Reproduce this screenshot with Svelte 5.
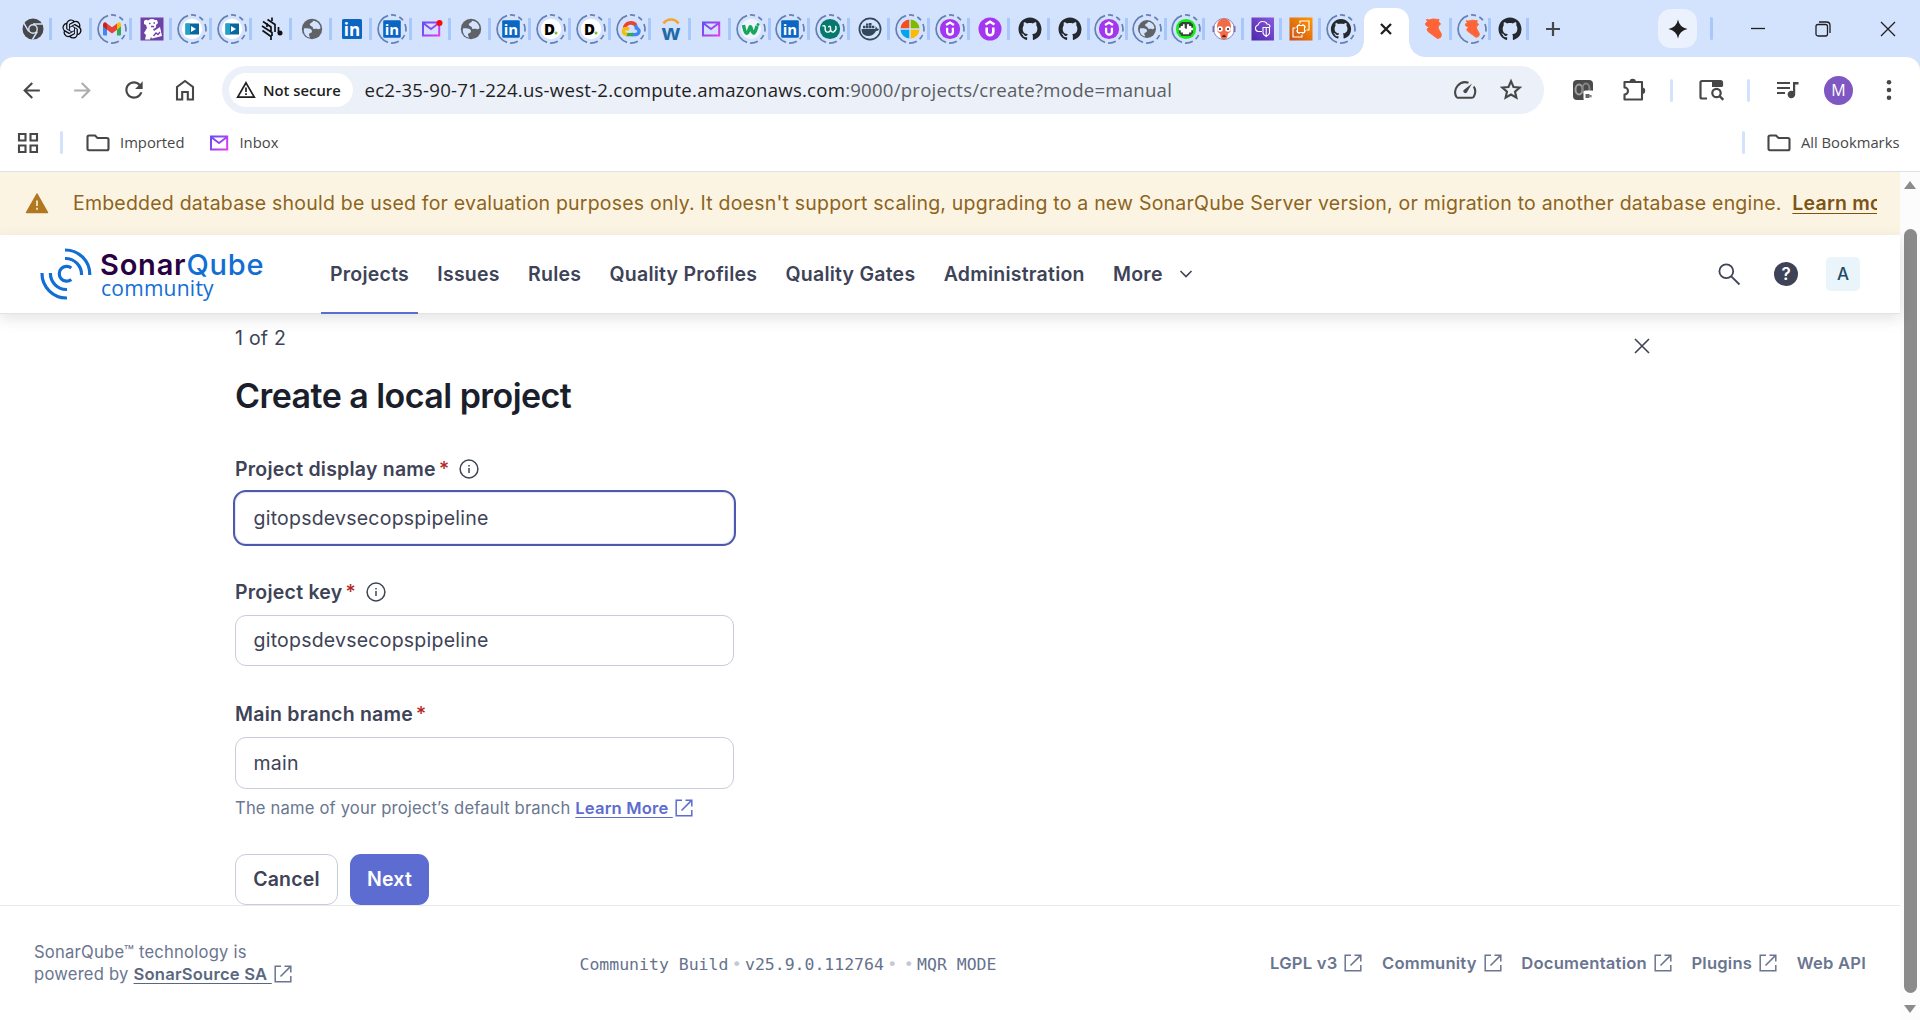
<script>
  const wideTabs = [
    ['chrome'], ['knot'], ['gmail', 1], ['dog'], ['video', 1], ['video', 1], ['stripes'], ['globe'],
    ['linkedin'], ['linkedin', 1], ['mailDot'], ['globe'], ['linkedin', 1], ['dee', 1], ['dee', 1],
    ['cloud', 1], ['dubArc'], ['mail'], ['greenW', 1], ['linkedin', 1], ['tealW', 1], ['docker'],
    ['windows', 1], ['udemy', 1], ['udemy'], ['github'], ['github']
  ];
  const narrowTabs = [
    ['udemy', 1], ['globe', 1], ['pulse', 1], ['argo'], ['purpleCloud'], ['ec2'], ['github', 1]
  ];
  const endTabs = [['brush'], ['brush', 1], ['github']];

  const navItems = ['Projects', 'Issues', 'Rules', 'Quality Profiles', 'Quality Gates', 'Administration'];
  const footerLinks = ['LGPL v3', 'Community', 'Documentation', 'Plugins'];

  const githubPath = 'M8 0C3.58 0 0 3.58 0 8c0 3.54 2.29 6.53 5.47 7.59.4.07.55-.17.55-.38 0-.19-.01-.82-.01-1.49-2.01.37-2.53-.49-2.69-.94-.09-.23-.48-.94-.82-1.13-.28-.15-.68-.52-.01-.53.63-.01 1.08.58 1.23.82.72 1.21 1.87.87 2.33.66.07-.52.28-.87.51-1.07-1.78-.2-3.64-.89-3.64-3.95 0-.87.31-1.59.82-2.15-.08-.2-.36-1.02.08-2.12 0 0 .67-.21 2.2.82.64-.18 1.32-.27 2-.27s1.36.09 2 .27c1.53-1.04 2.2-.82 2.2-.82.44 1.1.16 1.92.08 2.12.51.56.82 1.27.82 2.15 0 3.07-1.87 3.75-3.65 3.95.29.25.54.73.54 1.48 0 1.07-.01 1.93-.01 2.2 0 .21.15.46.55.38A8.01 8.01 0 0 0 16 8c0-4.42-3.58-8-8-8z';
  const knotPath = 'M22.2819 9.8211a5.9847 5.9847 0 0 0-.5157-4.9108 6.0462 6.0462 0 0 0-6.5098-2.9A6.0651 6.0651 0 0 0 4.9807 4.1818a5.9847 5.9847 0 0 0-3.9977 2.9 6.0462 6.0462 0 0 0 .7427 7.0966 5.98 5.98 0 0 0 .511 4.9107 6.051 6.051 0 0 0 6.5146 2.9001A5.9847 5.9847 0 0 0 13.2599 24a6.0557 6.0557 0 0 0 5.7718-4.2058 5.9894 5.9894 0 0 0 3.9977-2.9001 6.0557 6.0557 0 0 0-.7475-7.0729zm-9.022 12.6081a4.4755 4.4755 0 0 1-2.8764-1.0408l.1419-.0804 4.7783-2.7582a.7948.7948 0 0 0 .3927-.6813v-6.7369l2.02 1.1686a.071.071 0 0 1 .038.052v5.5826a4.504 4.504 0 0 1-4.4945 4.4944zm-9.6607-4.1254a4.4708 4.4708 0 0 1-.5346-3.0137l.142.0852 4.783 2.7582a.7712.7712 0 0 0 .7806 0l5.8428-3.3685v2.3324a.0804.0804 0 0 1-.0332.0615L9.74 19.9502a4.4992 4.4992 0 0 1-6.1408-1.6464zM2.3408 7.8956a4.485 4.485 0 0 1 2.3655-1.9728V11.6a.7664.7664 0 0 0 .3879.6765l5.8144 3.3543-2.0201 1.1685a.0757.0757 0 0 1-.071 0l-4.8303-2.7865A4.504 4.504 0 0 1 2.3408 7.872zm16.5963 3.8558L13.1038 8.364 15.1192 7.2a.0757.0757 0 0 1 .071 0l4.8303 2.7913a4.4944 4.4944 0 0 1-.6765 8.1042v-5.6772a.79.79 0 0 0-.407-.667zm2.0107-3.0231l-.142-.0852-4.7735-2.7818a.7759.7759 0 0 0-.7854 0L9.409 9.2297V6.8974a.0662.0662 0 0 1 .0284-.0615l4.8303-2.7866a4.4992 4.4992 0 0 1 6.6802 4.66zM8.3065 12.863l-2.02-1.1638a.0804.0804 0 0 1-.038-.0567V6.0742a4.4992 4.4992 0 0 1 7.3757-3.4537l-.142.0805L8.704 5.459a.7948.7948 0 0 0-.3927.6813zm1.0976-2.3654l2.602-1.4998 2.6069 1.4998v2.9994l-2.5974 1.4997-2.6067-1.4997Z';
</script>

{#snippet glyph(kind)}
  {#if kind === 'chrome'}
    <circle r="10.5" fill="#474747" />
    <circle r="4.9" fill="#d3e2fd" />
    <circle r="3.5" fill="#474747" />
    <path d="M0-4.9H9.6M4.3 2.5-.6 10.6M-4.3 2.5-9-5.7" stroke="#d3e2fd" stroke-width="1.5" />
  {:else if kind === 'knot'}
    <path transform="translate(-9.6 -9.6) scale(.8)" d={knotPath} fill="#0d0d0d" />
  {:else if kind === 'gmail'}
    <path d="M-9-4.5V5.2q0 1.3 1.3 1.3h2.7V-2z" fill="#4285f4" />
    <path d="M9-4.5V5.2q0 1.3-1.3 1.3H5V-2z" fill="#34a853" />
    <path d="M5-5.6 6-6.4Q9-7.5 9-4v1.6L5 .8z" fill="#fbbc04" />
    <path d="M-5-5.6 0-1.8 5-5.6V.8L0 4.5-5 .8z" fill="#ea4335" />
    <path d="M-5-5.6-6-6.4Q-9-7.5-9-4v1.6L-5 .8z" fill="#c5221f" />
  {:else if kind === 'dog'}
    <rect x="-11.5" y="-11.5" width="23" height="23" fill="#6f42a5" />
    <path d="M-8-8Q-6-10-4-8.5 0-11 3-9L5-9 6-6 4-4Q5-1 1 0L2 2 8-2 10 7 0 9.500-1 8-2 10.500H-7L-6 6-8 4-5-1-6-4-8-5z" fill="#fff" />
    <path d="M-3-5.500h1.500M1.500-6H3M-1-2.500h3M1.500 7 4 4 6 5.500 8 3" stroke="#6f42a5" stroke-width="1.300" fill="none" />
  {:else if kind === 'video'}
    <circle r="10.2" fill="#fff" />
    <rect x="-6.5" y="-5.5" width="13.5" height="11" fill="#0a66a0" />
    <rect x="-6.5" y="-5.5" width="4.5" height="11" fill="#1fa3c8" />
    <path d="M-1-3 4 0-1 3z" fill="#fff" />
  {:else if kind === 'stripes'}
    <path d="M0-11.500V-8M-4.500-9.500 3-4.500V-1M-9-7.500-1-2V2M-10-3 0 3.500V7M-9.500 1.500-1 7.500V11M3-4.500V3M6.500-2V4M-5-6v4" stroke="#111" stroke-width="1.700" fill="none" />
    <circle cx="8" cy="4" r="2.5" fill="#111" />
  {:else if kind === 'globe'}
    <circle r="10.2" fill="#5f6368" />
    <path d="M-8-.5C-6-1 0-.8 0 2s-3 1.5-3 3.5 1 1.500 1 3C-6 8.500-9 4-8-.5zM1-8.200C1-6-3-6-2-4s3 1 3 3 3 0 4.500 1 3-1 3-1C8.200-5 5-8 1-8.200z" fill="#d3e2fd" />
  {:else if kind === 'linkedin'}
    <rect x="-10" y="-10" width="20" height="20" rx="1.500" fill="#0a66c2" />
    <text x="0" y="7" text-anchor="middle" class="in">in</text>
  {:else if kind === 'mail' || kind === 'mailDot'}
    <path d="M-8-6.500H8.200V6.500H-8zM-8-6 0 0 8-6" fill="none" stroke="url(#mailGrad)" stroke-width="2" />
    {#if kind === 'mailDot'}<circle cx="8.500" cy="-6" r="3" fill="#f80c0c" />{/if}
  {:else if kind === 'dee'}
    <circle r="10.2" fill="#fff" />
    <text x="-1.500" y="5.500" text-anchor="middle" class="dee">D</text>
    <circle cx="5" cy="4" r="1.500" fill="#86bc25" />
  {:else if kind === 'cloud'}
    <path d="M-6.500-1A6.500 6.500 0 0 1 5-3.500" stroke="#ea4335" stroke-width="3.600" fill="none" />
    <path d="M4-3.500Q6.500-1 6-.5 9 1 7.500 4 6.500 6 1 5.500" stroke="#4285f4" stroke-width="3.400" fill="none" />
    <path d="M2 5.600H-5" stroke="#34a853" stroke-width="3.400" />
    <path d="M-4 5.600Q-8 5-7.500 1.500-6.500-2-2 .5" stroke="#fbbc04" stroke-width="3.400" fill="none" />
  {:else if kind === 'dubArc'}
    <path d="M-7.500-5.500A9 9 0 0 1 7.500-5.500" stroke="#f5a52c" stroke-width="2.600" fill="none" />
    <text x="0" y="11" text-anchor="middle" class="dub">w</text>
  {:else if kind === 'greenW'}
    <circle r="10.2" fill="#eef3fd" />
    <path d="M-7.500-4C-6 5-4 6-2.500 2L-1-2C0-4 1 5 3 4 5 2 5 0 6-3" stroke="#16a75c" stroke-width="3.400" fill="none" stroke-linejoin="round" />
    <circle cx="7" cy="-4.500" r="1.500" fill="#16a75c" />
  {:else if kind === 'tealW'}
    <circle r="11.500" fill="#05796b" />
    <path d="M-8-3.500Q-5.500-4.500-5.500-2-6 4-2 3.500 1.500 3 .5-2 0-4-1.500-2.500M.5 0Q1 4 4 3.500 8 1 6.500-3" stroke="#fff" stroke-width="1.600" fill="none" stroke-linecap="round" />
  {:else if kind === 'docker'}
    <circle r="10.6" fill="none" stroke="#33475b" stroke-width="1.700" />
    <path d="M-8.500 0H5q1-1 .5-2.500Q7-2 7-.5 9-.5 9 .5 8 2 6 2 3.500 7-2 7-8.500 7-8.500 0zM-7-3.200h2.500V-.7H-7zM-4-3.200h2.500V-.7H-4zM-1-3.200h2.500V-.7H-1zM-1-6h2.500v2.400H-1zM2-3.200h2.300V-.7H2zM-4-5.400h2.500v1.800H-4z" fill="#33475b" />
  {:else if kind === 'windows'}
    <path d="M-.7-9.500V-.7H-9.500A9.500 9.500 0 0 1-.7-9.500z" fill="#f25022" />
    <path d="M.7-9.500V-.7H9.500A9.500 9.500 0 0 0 .7-9.500z" fill="#7fba00" />
    <path d="M-.7 9.500V.7H-9.500A9.500 9.500 0 0 0-.7 9.500z" fill="#00a4ef" />
    <path d="M.7 9.500V.7H9.500A9.500 9.500 0 0 1 .7 9.500z" fill="#ffb900" />
  {:else if kind === 'udemy'}
    <circle r="11.500" fill="#a435f0" />
    <path d="M-4.500-4.500 0-7.300l4.500 2.800M-3.300-1.500V3a3.300 3.300 0 0 0 6.600 0V-1.500" stroke="#fff" stroke-width="2.600" fill="none" />
  {:else if kind === 'github'}
    <path transform="translate(-11.5 -11.5) scale(1.437)" d={githubPath} fill="#24292f" />
  {:else if kind === 'pulse'}
    <circle r="11.500" fill="#12ef12" />
    <path d="M-5-8H5L8-5V4L5 8H-5L-8 4V-5z" fill="#3a4540" />
    <path d="M-6-3.500h2.500v-2h2V-1H1V-5.500H3.500v2H6V-1.500H8V1.500H6V4H3.500V6h-7V4H-6V1.500H-8V-1.500H-6z" fill="#fff" />
    <path d="M0-6V0" stroke="#3a4540" stroke-width="1.400" />
  {:else if kind === 'argo'}
    <circle r="10.5" fill="#fff" stroke="#8c86b8" stroke-width="1" />
    <path d="M-7-3A7 7.500 0 0 1 7-3V0Q7 3 4 4.500L3 9q-3 2.500-6 0l-1-4.500Q-7 3-7 0z" fill="#f26b47" />
    <circle cx="-4" r="2.800" fill="#fff" /><circle cx="4" r="2.800" fill="#fff" />
    <circle cx="-4" r="1.100" fill="#222" /><circle cx="4" r="1.100" fill="#222" />
    <path d="M-2 8q0-2 2-2t2 2z" fill="#4a2018" />
    <path d="M-10.500-3v6M10.500-3v6" stroke="#7b73b0" stroke-width="2" />
  {:else if kind === 'purpleCloud'}
    <rect x="-11.500" y="-11.500" width="22.500" height="23" fill="url(#vpcGrad)" />
    <path d="M-1 2.500H-5Q-8 1.500-7.500-1.500-7-3.500-5-4-3.500-8 0-7.500 3-7.500 4-5 7-5 7-2M0-1.500h6.500V4Q6 6 3.200 7.500.5 6 0 4zM3.200-1.500v9" stroke="#fff" stroke-width="1.100" fill="none" />
  {:else if kind === 'ec2'}
    <rect x="-11.500" y="-11.500" width="23" height="23" fill="url(#ec2Grad)" />
    <path d="M-3.500-3.500h7v7h-7zM-1-5.500V-8H8V1H5.500M1 5.500V8H-8V-1h2.500M-2-5v1.500M2-5v1.500M-2 3.500V5M2 3.500V5M-5-2h1.500M-5 2h1.500M3.500-2H5M3.500 2H5" stroke="#fff" stroke-width="1.100" fill="none" />
  {:else if kind === 'brush'}
    <path d="M-6.500-9.500-4-9 0-10 6-9.500 5.500-7.500 7.500-5 5.500-3 5-1 8.500 5.500 7.500 8.500 4.500 9.500-5 2.500-6 0-3.500-2-7-3.500-7.500-5.500-5.500-7.500z" fill="#ff6436" stroke="#ff6436" stroke-width="1" stroke-linejoin="round" />
  {/if}
{/snippet}

{#snippet tab([kind, asleep])}
  <svg class="favicon" viewBox="-15 -15 30 30" width="30" height="30">
    {#if asleep}
      <path class="ring" d="M-4-13.400A14 14 0 0 0-4 13.400M-1-14A14 14 0 0 1 4-13.400M7.300-12A14 14 0 0 1 11-8.700M13-5A14 14 0 0 1 13.800 2.500M12.600 6A14 14 0 0 1 9.600 10.200M6.800 12.200A14 14 0 0 1-1 14" />
      <g transform={['video', 'dee', 'greenW', 'windows', 'gmail', 'cloud'].includes(kind) ? null : 'scale(.88)'}>
        {@render glyph(kind)}
      </g>
    {:else}
      {@render glyph(kind)}
    {/if}
  </svg>
{/snippet}

{#snippet external()}
  <svg class="ext" viewBox="0 0 18 18" width="18" height="18">
    <path d="M7 1.200H1.200V16.800H16.800V11M10.500 1.200H16.800V7.500M16.600 1.400 6.500 11.500" />
  </svg>
{/snippet}

{#snippet info()}
  <svg class="info" viewBox="0 0 20 20" width="20" height="20">
    <circle cx="10" cy="10" r="8.900" /><path d="M10 9v5M10 6v1.500" />
  </svg>
{/snippet}

{#snippet folder()}
  <svg viewBox="0 0 24 18" width="24" height="18" class="stroke2">
    <path d="M1.500 14.500V3Q1.500 1.500 3 1.500H9L11.500 4H21Q22.500 4 22.500 5.500V14.700Q22.500 16.200 21 16.200H3Q1.500 16.200 1.500 14.500z" />
  </svg>
{/snippet}

<svg class="defs" width="0" height="0">
  <defs>
    <linearGradient id="mailGrad" gradientUnits="userSpaceOnUse" x1="-8" y1="-6" x2="8" y2="7">
      <stop offset="0" stop-color="#6a4df5" /><stop offset=".5" stop-color="#9b45f5" /><stop offset="1" stop-color="#e83af0" />
    </linearGradient>
    <linearGradient id="vpcGrad" x1="0" y1="1" x2="1" y2="0">
      <stop offset="0" stop-color="#4d27a8" /><stop offset="1" stop-color="#8a5ae0" />
    </linearGradient>
    <linearGradient id="ec2Grad" x1="0" y1="1" x2="1" y2="0">
      <stop offset="0" stop-color="#c8511b" /><stop offset="1" stop-color="#f90" />
    </linearGradient>
  </defs>
</svg>

<div class="window">
  <header class="tabstrip">
    {#each wideTabs as t}<div class="tab">{@render tab(t)}</div>{/each}
    {#each narrowTabs as t}<div class="tab narrow">{@render tab(t)}</div>{/each}
    <div class="tab active">
      <svg viewBox="0 0 14 14" width="14" height="14"><path d="M2 2l10 10M12 2 2 12" stroke="#1f1f1f" stroke-width="2.300" /></svg>
    </div>
    {#each endTabs as t}<div class="tab narrow">{@render tab(t)}</div>{/each}
    <div class="newtab">
      <svg viewBox="0 0 16 16" width="16" height="16"><path d="M8 1v14M1 8h14" stroke="#474747" stroke-width="2.200" /></svg>
    </div>
    <div class="spark">
      <svg viewBox="0 0 20 20" width="20" height="20"><path d="M10 .5Q11.500 8.500 19.500 10 11.500 11.500 10 19.500 8.500 11.500.5 10 8.500 8.500 10 .5z" fill="#1f1f1f" /></svg>
    </div>
    <div class="sep strip"></div>
    <div class="controls">
      <svg viewBox="0 0 16 16" width="16" height="16"><path d="M1 7.500h14" /></svg>
      <svg viewBox="0 0 16 16" width="16" height="16"><rect x="1" y="3.500" width="11.500" height="11.500" rx="2" /><path d="M4 1H11.500Q15 1 15 4.500V12" /></svg>
      <svg viewBox="0 0 16 16" width="16" height="16"><path d="M1 1l14 14M15 1 1 15" /></svg>
    </div>
  </header>

  <div class="chrome">
    <div class="toolbar">
      <div class="cell"><svg viewBox="0 0 24 24" width="25" height="25"><path d="M20 11H7.830l5.590-5.590L12 4l-8 8 8 8 1.410-1.410L7.830 13H20v-2z" /></svg></div>
      <div class="cell dim"><svg viewBox="0 0 24 24" width="25" height="25"><path d="M4 11h12.170l-5.590-5.590L12 4l8 8-8 8-1.410-1.410L16.170 13H4v-2z" /></svg></div>
      <div class="cell"><svg viewBox="0 0 24 24" width="26" height="26"><path d="M17.650 6.350C16.200 4.900 14.210 4 12 4c-4.420 0-7.990 3.580-7.990 8s3.570 8 7.990 8c3.730 0 6.840-2.550 7.730-6h-2.080c-.820 2.330-3.040 4-5.650 4-3.310 0-6-2.690-6-6s2.690-6 6-6c1.660 0 3.140.690 4.220 1.780L13 11h7V4l-2.350 2.350z" /></svg></div>
      <div class="cell"><svg viewBox="0 0 20 22" width="20" height="22" class="stroke2"><path d="M2 20.500V8L10 2l8 6V20.500H12.800V13H7.200V20.500z" /></svg></div>

      <div class="omnibox">
        <div class="chip">
          <svg viewBox="0 0 20 18" width="20" height="18"><path d="M10 1.800 18.300 16.200H1.700z" fill="none" stroke="#1f1f1f" stroke-width="1.700" /><path d="M10 6.500v4.500M10 12.300V14" stroke="#1f1f1f" stroke-width="1.700" /></svg>
          <span>Not secure</span>
        </div>
        <div class="url"><b>ec2-35-90-71-224.us-west-2.compute.amazonaws.com</b>:9000/projects/create?mode=manual</div>
        <svg class="gauge stroke2" viewBox="0 0 24 20" width="24" height="20"><path d="M15.500 2.800A10 10 0 0 0 3.200 16.600Q3.800 17.800 5 17.800H19Q20.200 17.800 20.800 16.600A10 10 0 0 0 20.800 6.500" /><path d="M19 3.500 13.800 12.500A2 2 0 0 1 10.500 10.300z" class="solid" /></svg>
        <svg class="star stroke2" viewBox="0 0 24 24" width="24" height="24"><path d="M12 3.200 14.500 9l6.200.5-4.700 4.100 1.400 6.100L12 16.500 6.600 19.700 8 13.600 3.300 9.500 9.500 9z" /></svg>
      </div>

      <div class="cell after"><svg viewBox="0 0 22 22" width="22" height="22"><rect x="1" y="1" width="20" height="20" rx="4" fill="#4a4a4a" /><ellipse cx="7" cy="10.500" rx="3.500" ry="5" fill="none" stroke="#a0a0a0" stroke-width="2" /><ellipse cx="14" cy="9.500" rx="3.500" ry="5" fill="none" stroke="#858585" stroke-width="2" /><rect x="11.500" y="11.500" width="10.500" height="10.500" rx="2" fill="#fff" /><path d="M13.500 15h4v4h-4zM17 16.800l2.500-1v3z" fill="#666" /></svg></div>
      <div class="cell"><svg viewBox="0 0 24 24" width="24" height="24" class="stroke2"><path d="M2.500 4H20V21.500H2.500V16.500A3.200 3.200 0 0 0 2.500 9.500z" stroke-linejoin="round" /><path d="M7.500 4A3.200 3.200 0 0 1 13.900 4zM20 9.500A3.200 3.200 0 0 1 20 15.900z" class="solid" /></svg></div>
      <div class="cell w25"><div class="sep"></div></div>
      <div class="cell w54"><svg viewBox="0 0 26 22" width="26" height="22"><path d="M9 19.500H4Q2.500 19.500 2.500 18V3.500Q2.500 2 4 2H22.500Q24 2 24 3.500V7.500M14 2" fill="none" stroke="#474747" stroke-width="2.200" /><path d="M14 2h10v6H14z" /><circle cx="18.500" cy="14" r="4.200" fill="none" stroke="#474747" stroke-width="2.200" /><path d="M21.500 17l3.800 3.800" stroke="#474747" stroke-width="2.400" /></svg></div>
      <div class="cell w21"><div class="sep"></div></div>
      <div class="cell w58"><svg viewBox="0 0 24 20" width="24" height="20"><path d="M1 3h13M1 8h13M1 13h8" stroke="#474747" stroke-width="2.100" /><path d="M17 2h5.500v2.500H19.200V14.500A3.800 3.800 0 1 1 17 11z" /></svg></div>
      <div class="cell w43"><div class="profile">M</div></div>
      <div class="cell w58"><svg viewBox="0 0 6 22" width="6" height="22"><circle cx="3" cy="3.200" r="2.300" /><circle cx="3" cy="11" r="2.300" /><circle cx="3" cy="18.800" r="2.300" /></svg></div>
    </div>

    <div class="bookmarks">
      <svg viewBox="0 0 22 22" width="22" height="22" class="stroke2"><path d="M2 2h6.500v6.500H2zM13.500 2H20v6.500h-6.500zM2 13.500h6.500V20H2zM13.500 13.500H20V20h-6.500z" /></svg>
      <div class="sep b1"></div>
      <div class="mark">{@render folder()}<span>Imported</span></div>
      <div class="mark inbox"><svg viewBox="-10 -8 20 16" width="20" height="16">{@render glyph('mail')}</svg><span>Inbox</span></div>
      <div class="sep b2"></div>
      <div class="mark all">{@render folder()}<span>All Bookmarks</span></div>
    </div>
  </div>

  <div class="viewport">
    <div class="page">
      <div class="banner">
        <svg viewBox="0 0 24 22" width="24" height="22"><path d="M12 2 22.500 20.500H1.500z" fill="#b07820" stroke="#b07820" stroke-width="1.500" stroke-linejoin="round" /><path d="M12 8.500v5.500M12 15.700v2" stroke="#fcf4e3" stroke-width="1.600" /></svg>
        <p><span class="msg">Embedded database should be used for evaluation purposes only. It doesn't support scaling, upgrading to a new SonarQube Server version, or migration to another database engine.</span> <a href="#learn">Learn more</a></p>
      </div>

      <nav class="navbar">
        <div class="logo">
          <svg viewBox="0 0 52 52" width="52" height="52" fill="none" stroke="#126ed3" stroke-width="3.200" stroke-linecap="butt">
            <path d="M31.300 20A7.400 7.400 0 1 0 31.300 31.500" />
            <path d="M25 10.500A16 16 0 0 1 41.500 27M25 2A24.500 24.500 0 0 1 49.800 27M10.400 25A16 16 0 0 0 27 41.500M2 25A24.500 24.500 0 0 0 27 50" />
          </svg>
          <div class="wordmark">
            <div class="name">Sonar<span>Qube</span></div>
            <div class="edition">community</div>
          </div>
        </div>
        <div class="menu">
          {#each navItems as item, i}<div class="item" class:current={i === 0}>{item}</div>{/each}
          <div class="item">More
            <svg viewBox="0 0 14 10" width="14" height="10"><path d="M1.500 2 7 7.500 12.500 2" fill="none" stroke="#3e4357" stroke-width="1.600" /></svg>
          </div>
        </div>
        <svg class="search" viewBox="0 0 24 24" width="24" height="24"><circle cx="9.300" cy="9.300" r="6.900" /><path d="M14.300 14.300 22.500 22.500" /></svg>
        <div class="help">?</div>
        <div class="avatar">A</div>
      </nav>

      <main>
        <div class="stephead">
          <span>1 of 2</span>
          <svg viewBox="0 0 16 16" width="16" height="16"><path d="M1 1l14 14M15 1 1 15" stroke="#3e4357" stroke-width="1.600" /></svg>
        </div>
        <h1>Create a local project</h1>
        <div class="field">
          <div class="label">Project display name<i>*</i>{@render info()}</div>
          <div class="input focus">gitopsdevsecopspipeline</div>
        </div>
        <div class="field second">
          <div class="label">Project key<i>*</i>{@render info()}</div>
          <div class="input">gitopsdevsecopspipeline</div>
        </div>
        <div class="field third">
          <div class="label">Main branch name<i>*</i></div>
          <div class="input">main</div>
          <div class="hint">The name of your project’s default branch <a href="#more">Learn More&nbsp;</a>{@render external()}</div>
        </div>
        <div class="actions">
          <button class="cancel">Cancel</button>
          <button class="next">Next</button>
        </div>
      </main>

      <footer>
        <div class="tech">SonarQube™ technology is<br />powered by <a href="#sonar">SonarSource SA&nbsp;</a>{@render external()}</div>
        <div class="build"><span>Community Build</span><em>•</em><span>v25.9.0.112764</span><em>•</em><em>•</em><span>MQR MODE</span></div>
        <div class="links">
          {#each footerLinks as l}<span>{l}{@render external()}</span>{/each}
          <span>Web API</span>
        </div>
      </footer>
    </div>

    <div class="scrollbar">
      <svg viewBox="0 0 14 10" width="14" height="10"><path d="M7 1 13 9H1z" /></svg>
      <div class="thumb"></div>
      <svg viewBox="0 0 14 10" width="14" height="10"><path d="M7 9 13 1H1z" /></svg>
    </div>
  </div>
</div>

<style>
  :global(body) { margin: 0; overflow: hidden; background: #fff; }
  .defs { display: block; height: 0; }
  .window {
    width: 1920px; height: 1020px; display: flex; flex-direction: column;
    background: #d3e2fd; overflow: hidden; font-family: Inter, sans-serif;
  }
  svg { flex: none; }

  /* Tab strip */
  .tabstrip { height: 57px; display: flex; align-items: center; padding-left: 12.600px; box-sizing: border-box; }
  .tab {
    width: 39.900px; height: 22px; flex: none; display: flex; align-items: center; justify-content: center; box-sizing: border-box;
    background: linear-gradient(#a8c7fa, #a8c7fa) right center / 3px 22px no-repeat;
  }
  .tab.narrow { width: 38.500px; }
  .tab:has(+ .active) { width: 43.200px; padding-right: 3px; background: none; }
  .favicon { overflow: visible; }
  .ring { fill: none; stroke: #6480b4; stroke-width: 1.700; }
  .in { font: 700 17px 'Open Sans', sans-serif; fill: #fff; }
  .dee { font: 800 15px 'Open Sans', sans-serif; fill: #000; }
  .dub { font: 700 22px 'Open Sans', sans-serif; fill: #1f6aa8; }
  .tab.active {
    width: 45px; height: 49px; margin-top: 8px; margin-right: 5px; padding-bottom: 8px; position: relative;
    background: #fff; border-radius: 13px 13px 0 0;
  }
  .tab.active::before, .tab.active::after { content: ''; position: absolute; bottom: 0; width: 16px; height: 16px; }
  .tab.active::before { right: 100%; background: radial-gradient(circle at 0 0, transparent 15.500px, #fff 16px); }
  .tab.active::after { left: 100%; background: radial-gradient(circle at 100% 0, transparent 15.500px, #fff 16px); }
  .newtab { width: 48px; display: flex; justify-content: center; }
  .spark { margin-left: 81px; width: 39px; height: 39px; border-radius: 13px; background: #ebf1fd; display: flex; align-items: center; justify-content: center; flex: none; }
  .sep { width: 3px; height: 23px; border-radius: 2px; background: #d3e3fd; flex: none; }
  .sep.strip { margin-left: 13px; background: #a8c7fa; }
  .controls { display: flex; gap: 49px; margin-left: 37px; fill: none; stroke: #1f1f1f; stroke-width: 1.300; }

  /* Toolbar */
  .chrome { background: #fff; border-radius: 14px 14px 0 0; height: 114px; flex: none; border-bottom: 1px solid #dde3e6; }
  .toolbar { height: 66px; padding-left: 6px; display: flex; align-items: center; fill: #474747; }
  .cell { width: 51px; flex: none; display: flex; align-items: center; justify-content: center; }
  .cell.dim { fill: #adadad; }
  .cell.after { margin-left: 13px; }
  .w25 { width: 25px; }
  .w54 { width: 54px; }
  .w21 { width: 21px; }
  .w58 { width: 58px; }
  .w43 { width: 43px; }
  .stroke2 { fill: none; stroke: #474747; stroke-width: 2.100; }
  .solid { fill: #474747; stroke: none; }
  .omnibox { width: 1322px; height: 48px; box-sizing: border-box; margin-left: 12px; padding: 0 21px 0 7px; border-radius: 24px; background: #ebf0f9; display: flex; align-items: center; flex: none; }
  .chip { width: 124px; height: 34px; box-sizing: border-box; border-radius: 17px; padding-left: 7px; background: #fff; display: flex; align-items: center; gap: 7px; font: 600 14.800px 'Open Sans', sans-serif; color: #1f1f1f; white-space: nowrap; }
  .url { margin: 0 0 2px 11.500px; font: 400 18.600px 'Open Sans', sans-serif; letter-spacing: .23px; color: #5a5d61; white-space: nowrap; }
  .url b { font-weight: 400; color: #1f1f1f; }
  .gauge { margin-left: auto; }
  .star { margin-left: 22px; }
  .profile { width: 29px; height: 29px; border-radius: 50%; background: #7e57c2; color: #fff; font: 400 16px/29px 'Open Sans', sans-serif; text-align: center; }

  .bookmarks { height: 39px; display: flex; align-items: center; padding-left: 17px; font: 400 14.800px 'Open Sans', sans-serif; color: #474747; white-space: nowrap; }
  .mark { display: flex; align-items: center; gap: 10px; }
  .mark span { margin-bottom: 2px; }
  .b1 { margin: 0 23px 0 21px; }
  .inbox { margin-left: 25px; gap: 10px; }
  .b2 { margin-left: auto; }
  .all { margin: 0 20.500px 0 22px; }

  /* Page */
  .viewport { flex: 1; display: flex; background: #fff; min-height: 0; }
  .page { width: 1900px; display: flex; flex-direction: column; color: #3e4357; }
  .banner { height: 63px; box-sizing: border-box; flex: none; display: flex; align-items: center; background: #fcf4e3; padding: 0 23px 1px 25px; color: #8c6421; font-size: 19.500px; letter-spacing: .21px; gap: 24px; }
  .banner svg { margin-bottom: 1px; }
  .banner p { margin: 0; overflow: hidden; white-space: nowrap; flex: 1; line-height: 28px; }
  .banner a { color: #7c5514; font-weight: 600; margin-left: 5px; text-underline-offset: 3px; }
  .navbar { height: 78px; flex: none; display: flex; align-items: center; box-shadow: 0 1px 0 #e1e3e8, 0 5px 14px rgba(40, 44, 60, .14); position: relative; padding: 0 40px; }
  .logo { display: flex; width: 281px; gap: 8px; align-items: center; }
  .name { font: 600 29px/30px Inter, sans-serif; letter-spacing: .8px; color: #290042; margin-top: 1px; }
  .name span, .edition { color: #126ed3; }
  .name span { font-weight: 500; }
  .edition { font: 400 21px/17px 'Open Sans', sans-serif; letter-spacing: .25px; margin: 0 0 3px 1px; }
  .menu { display: flex; height: 100%; gap: 10.300px; flex: 1; }
  .item { padding: 0 9px 1px; height: 79px; display: flex; align-items: center; font-weight: 600; font-size: 19.500px; letter-spacing: .23px; box-sizing: border-box; border-top: 2px solid transparent; border-bottom: 2px solid transparent; white-space: nowrap; }
  .item svg { margin-left: 16px; }
  .current { border-bottom-color: #5d6cd0; }
  .search { fill: none; stroke: #3e4357; stroke-width: 1.800; margin-right: 33px; }
  .help { width: 24px; height: 24px; border-radius: 50%; background: #3e4357; color: #fff; font: 600 17px/24px Inter, sans-serif; text-align: center; margin-right: 28px; }
  .avatar { width: 34px; height: 34px; border-radius: 5px; background: #e9f4fb; color: #1c4a66; font-size: 17px; line-height: 34px; text-align: center; font-weight: 500; }

  main { width: 1415px; margin-left: 235px; flex: 1; display: flex; flex-direction: column; font-size: 19.500px; letter-spacing: .23px; }
  .stephead { margin-top: 11px; height: 28px; display: flex; justify-content: space-between; line-height: 28px; }
  .stephead svg { margin-top: 14px; }
  h1 { margin: 22px 0 0; font-size: 34px; line-height: 44px; font-weight: 600; letter-spacing: -.55px; color: #1b1e2b; }
  .field { display: flex; flex-direction: column; margin-top: 37px; }
  .field.second { margin-top: 34px; }
  .field.third { margin-top: 34px; }
  .label { height: 28px; display: flex; align-items: center; font-weight: 600; }
  .label i { font-style: normal; color: #b3261e; margin-left: 3px; font-weight: 500; }
  .info { margin-left: 10px; fill: none; stroke: #3e4357; stroke-width: 1.500; }
  .input { margin-top: 9px; width: 499px; height: 51px; box-sizing: border-box; border: 1px solid #c9cdd9; border-radius: 11px; padding-left: 17.500px; line-height: 49px; }
  .third .input { height: 52px; line-height: 50px; }
  .focus { height: 52px; line-height: 51px; border-color: #e4e7f8; outline: 2px solid #4d58ae; }
  .hint { font-size: 16.600px; letter-spacing: .17px; color: #69778f; line-height: 24px; margin-top: 7px; display: flex; align-items: center; white-space: pre; }
  .hint a { color: #5d6cd0; font-weight: 600; text-underline-offset: 3px; }
  .hint .ext { stroke: #5d6cd0; }
  .ext { width: 18px; height: 18px; fill: none; stroke: #6a7590; stroke-width: 1.500; margin-left: 2px; }
  .actions { display: flex; gap: 12px; margin-top: 34px; }
  button { height: 51px; border-radius: 11px; font: 600 19.500px Inter, sans-serif; letter-spacing: .2px; padding: 0 0 1px; }
  .cancel { width: 103px; border: 1px solid #c9cdd9; background: #fff; color: #3e4357; }
  .next { width: 79px; border: 0; background: #5d6cd0; color: #fff; }

  footer { height: 115px; flex: none; box-sizing: border-box; border-top: 1px solid #e6e9ed; display: grid; grid-template-columns: 545.500px 1fr auto; align-items: center; padding: 0 34px 1px; color: #6a7590; font-size: 16.600px; letter-spacing: .22px; }
  .tech { line-height: 22px; }
  .tech a { color: #5b6780; font-weight: 600; text-underline-offset: 3px; }
  .tech .ext { vertical-align: -3px; }
  .build { font: 400 16.500px 'DejaVu Sans Mono', monospace; letter-spacing: -.01px; display: flex; color: #66728d; margin-top: 4px; }
  em { font-style: normal; color: #c3c9d6; width: 16.600px; text-align: center; }
  .links { display: flex; gap: 19.500px; font-weight: 600; }
  .links span { display: flex; align-items: center; }
  .links .ext { margin-left: 7px; }

  .scrollbar { width: 20px; background: #fcfcfc; display: flex; flex-direction: column; align-items: center; padding: 8px 0 6px; box-sizing: border-box; fill: #8b8b8b; }
  .thumb { width: 13px; height: 764px; border-radius: 7px; background: #8b8b8b; margin: 39px 0 11px; }
</style>
